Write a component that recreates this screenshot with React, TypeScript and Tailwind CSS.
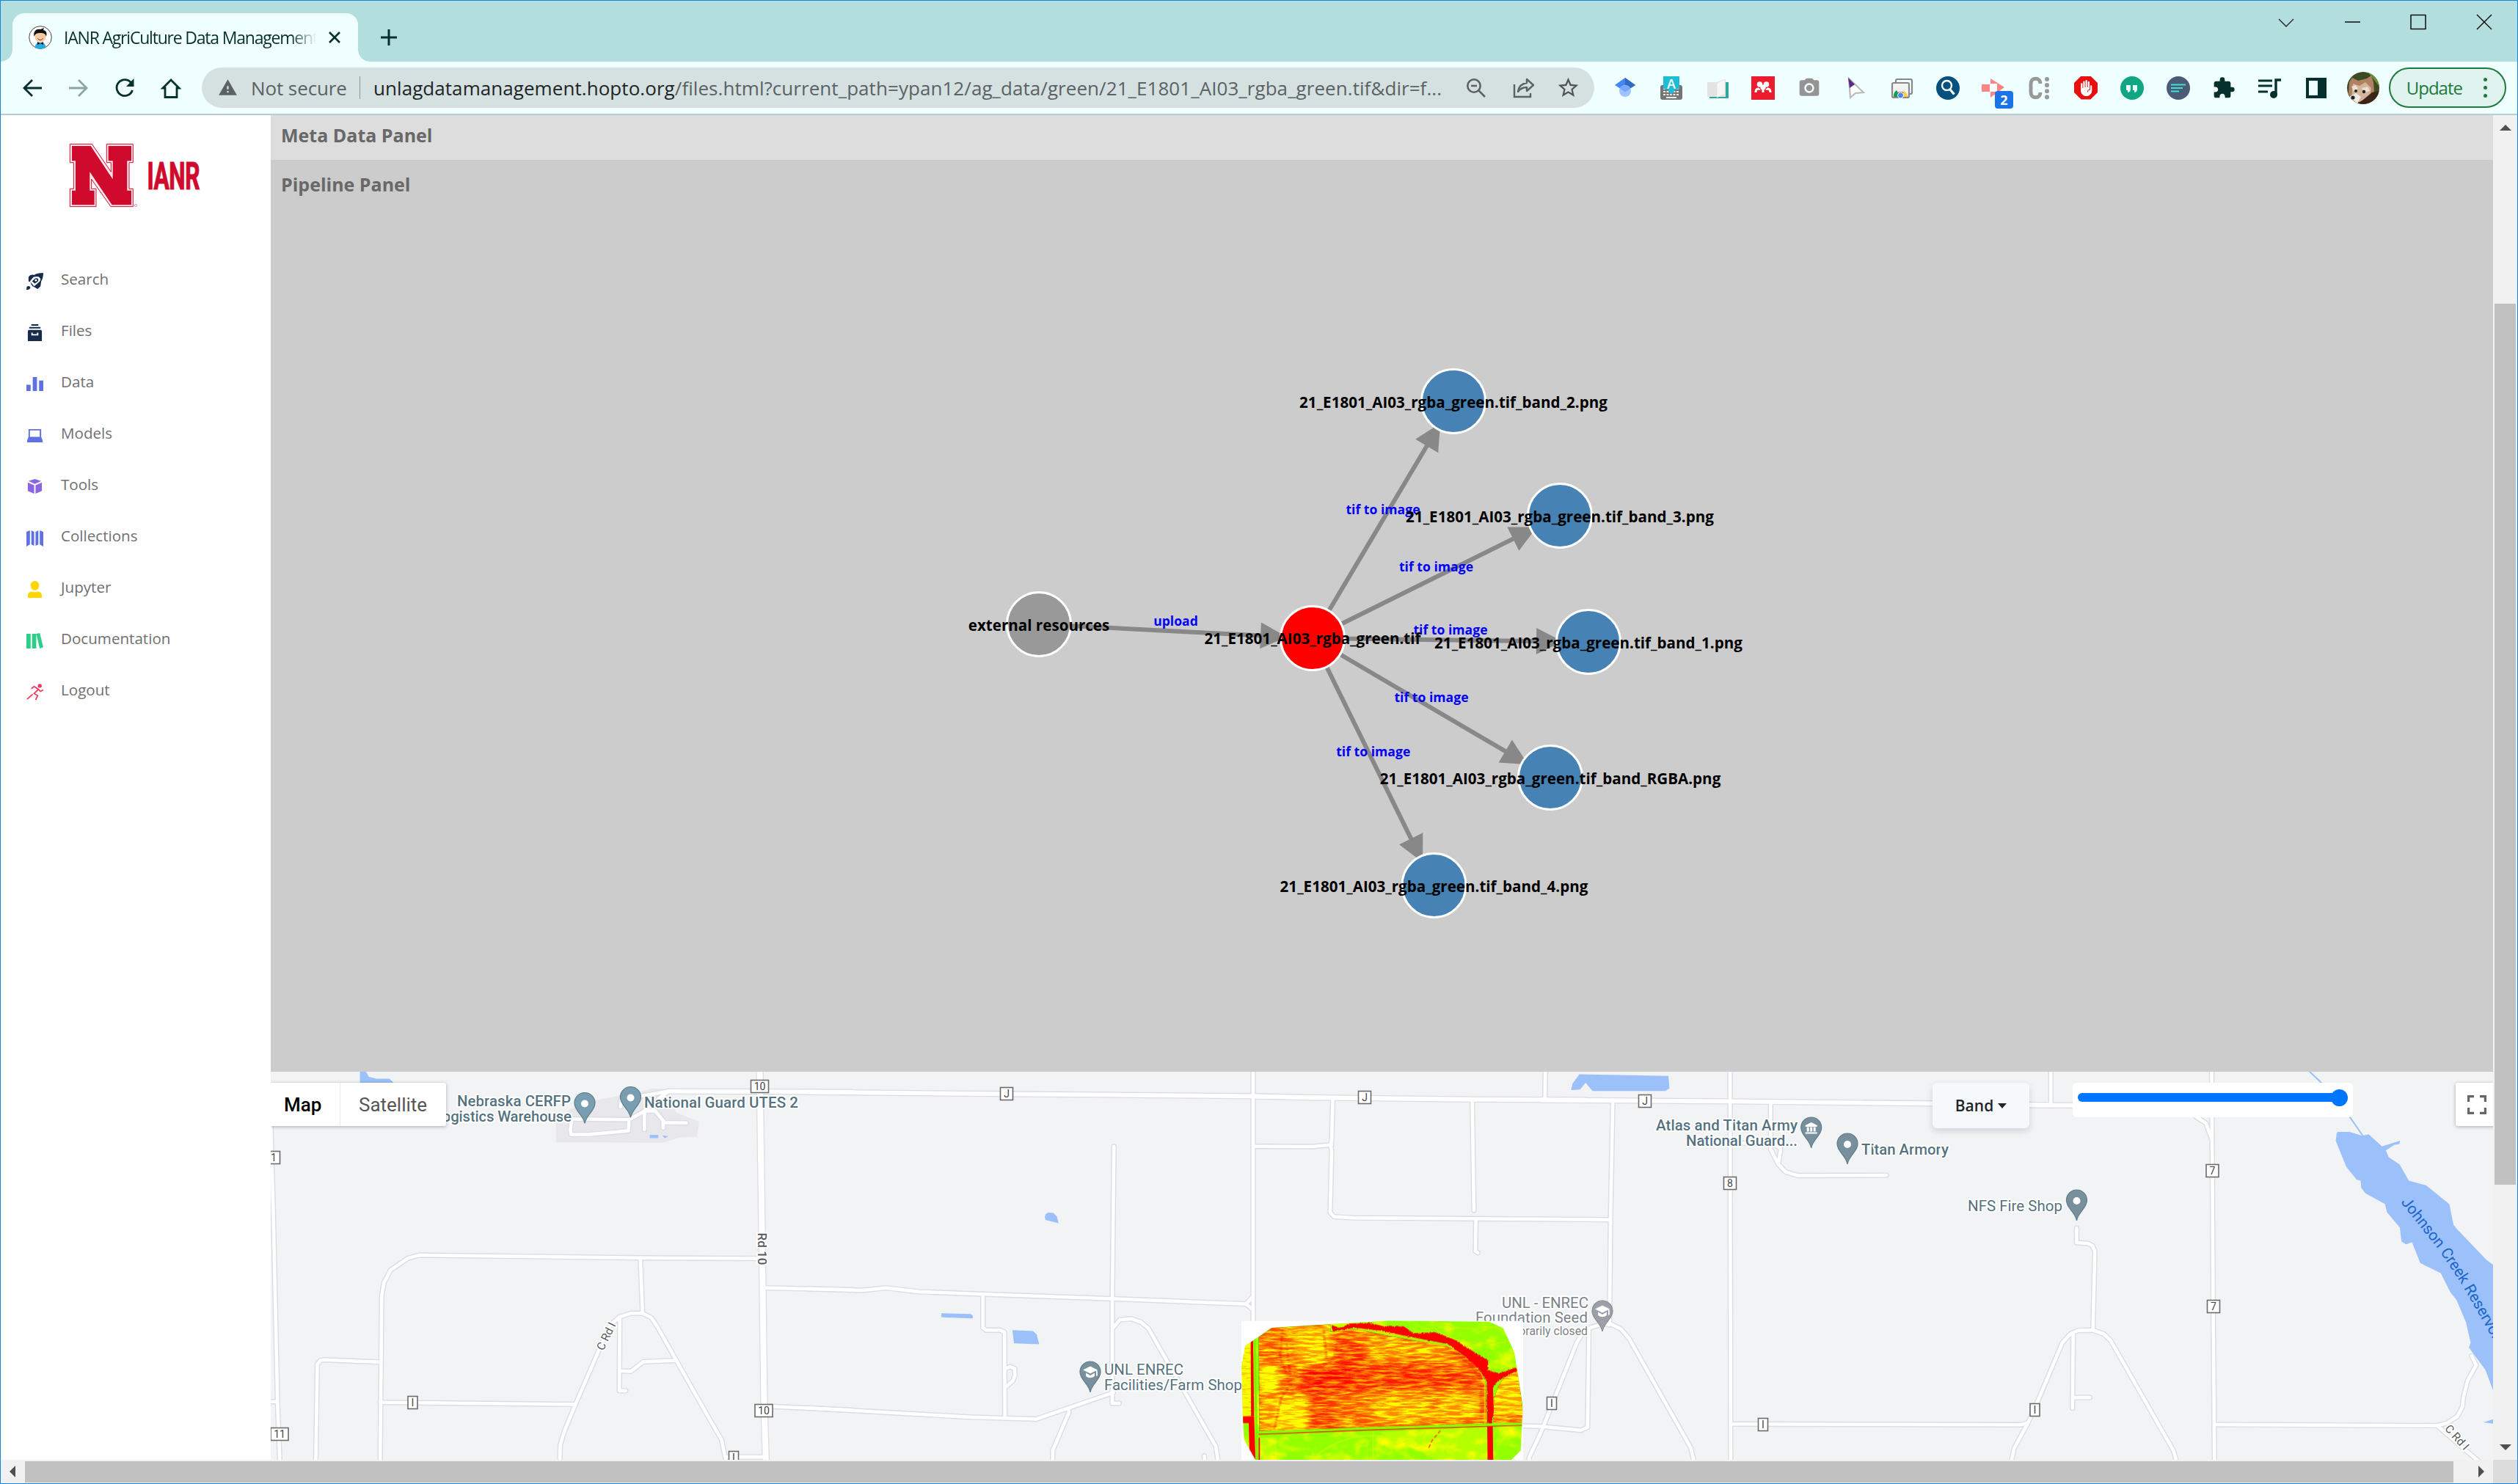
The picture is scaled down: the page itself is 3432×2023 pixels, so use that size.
import React from "react";
import { MdWarning, MdStarBorder, MdExtension, MdPhotoCamera, MdFrontHand } from "react-icons/md";

/* ---------- browser chrome ---------- */

function Avatar() {
  return (
    <svg viewBox="0 0 32 32" className="h-8 w-8 shrink-0">
      <circle cx="16" cy="16" r="15.3" fill="#fff" stroke="#444" strokeWidth="1" />
      <path d="M9 30c-.5-5 2-7 7-7s7.500 2 7 7a15 15 0 0 1-14 0z" fill="#29abe2" />
      <circle cx="16" cy="15" r="7.500" fill="#f6c9a5" />
      <path d="M7.500 15C6 7 11 4 16 5l5-2-1 3c5 1 5 5 4 9-1-4-3-5-8-5s-7 1-8.500 5z" fill="#111" />
      <path d="M12.500 17.500q3.500 4 7 0" stroke="#7a3b1d" fill="none" />
      <path d="M12 22l4 2 4-2v4l-4-2-4 2z" fill="#111" />
    </svg>
  );
}

function TitleBar() {
  return (
    <div className="flex h-[83px] w-full bg-[#b2dfdd]">
      <div className="flex w-[503px] shrink-0 items-end">
        <div className="flex h-[66px] w-full items-end">
          <div className="h-4 w-4 bg-[radial-gradient(circle_at_0_0,#b2dfdd_15.5px,#f0ffff_16px)]" />
          <div className="flex h-[66px] w-[471px] items-center rounded-t-2xl bg-[#f0ffff] pl-[22px]">
            <Avatar />
            <div className="ml-4 w-[344px] overflow-hidden whitespace-nowrap font-['Open_Sans'] text-[23px] leading-[30px] tracking-[-1.2px] text-[#06302e] [mask-image:linear-gradient(90deg,#000_90%,transparent)]">
              IANR AgriCulture Data Management
            </div>
            <svg viewBox="0 0 18 18" className="ml-4 h-[18px] w-[18px]" stroke="#06302e" strokeWidth="2.600">
              <path d="M2 2l14 14M16 2L2 16" />
            </svg>
          </div>
          <div className="h-4 w-4 bg-[radial-gradient(circle_at_100%_0,#b2dfdd_15.5px,#f0ffff_16px)]" />
        </div>
      </div>
      <svg viewBox="0 0 24 24" className="ml-[14px] mt-[38px] h-6 w-6" stroke="#06302e" strokeWidth="3">
        <path d="M12 1v22M1 12h22" />
      </svg>
      <div className="flex flex-1 justify-end gap-[66px] pr-[33px] pt-[18px]">
        <svg viewBox="0 0 24 24" className="h-6 w-6" stroke="#222" strokeWidth="1.400" fill="none">
          <path d="M2 7l10 10L22 7" />
        </svg>
        <svg viewBox="0 0 24 24" className="h-6 w-6" stroke="#000" strokeWidth="1.400">
          <path d="M2 11h21" />
        </svg>
        <svg viewBox="0 0 24 24" className="h-6 w-6" stroke="#000" strokeWidth="1.400" fill="none">
          <rect x="2" y="1.500" width="20" height="19" />
        </svg>
        <svg viewBox="0 0 24 24" className="h-6 w-6" stroke="#000" strokeWidth="1.400">
          <path d="M2 1l20 20M22 1L2 21" />
        </svg>
      </div>
    </div>
  );
}

function Nav({ children, dim }: { children: React.ReactNode; dim?: boolean }) {
  return (
    <svg
      viewBox="0 0 28 28"
      className="h-7 w-7 shrink-0"
      fill="none"
      stroke={dim ? "#8aa5a3" : "#06302e"}
      strokeWidth="2.800"
    >
      {children}
    </svg>
  );
}

function Ext({ children }: { children: React.ReactNode }) {
  return (
    <svg viewBox="0 0 32 32" className="h-8 w-8 shrink-0 overflow-visible">
      {children}
    </svg>
  );
}

function Extensions() {
  return (
    <div className="flex items-center gap-[30.800px]">
      <Ext>
        <path d="M16 2L30 12 16 21 2 12z" fill="#4285f4" />
        <path d="M16 2L30 12 16 21z" fill="#356ac3" />
        <circle cx="16" cy="20" r="8" fill="#a0c3ff" />
        <path d="M9 17a8 8 0 0 1 14 0l-7 4.500z" fill="#76a7fa" />
      </Ext>
      <Ext>
        <rect x="1" y="12" width="30" height="20" rx="3" fill="#757575" />
        <path d="M5 17h22M5 21h22M5 25h22" stroke="#e8e8e8" strokeWidth="2" strokeDasharray="3 1.500" />
        <path d="M9 29h14" stroke="#eee" strokeWidth="2" />
        <path d="M5 0h22v17l-5 1-6 7-5-7-6-1z" fill="#1fbcd6" />
        <text x="16" y="17" textAnchor="middle" fontSize="18" fontWeight="600" fill="#fff" fontFamily="Open Sans">A</text>
      </Ext>
      <Ext>
        <path d="M27 8h4v22H5v-2z" fill="#2fa69c" />
        <path d="M2 8h12l13-4v24H2z" fill="#e3e3e3" />
        <path d="M15 9l11-5v20l-11 5z" fill="#f6f6f6" stroke="#ddd" strokeWidth=".6" />
      </Ext>
      <Ext>
        <rect width="32" height="32" fill="#eb1c2d" />
        <circle cx="11.500" cy="11" r="3.800" fill="#fff" />
        <circle cx="20.500" cy="11" r="3.800" fill="#fff" />
        <circle cx="16" cy="15" r="3.600" fill="#fff" />
        <path d="M6 22c0-6 5-6 5-3M16 17v5M26 22c0-6-5-6-5-3" stroke="#fff" strokeWidth="3" fill="none" />
      </Ext>
      <MdPhotoCamera className="h-8 w-8 shrink-0" color="#949494" />
      <Ext>
        <path d="M7 3l2 26 7-6 11-1z" fill="#fff" stroke="#b9b9b9" strokeWidth="2.200" />
        <path d="M6 2l9 9-7 5z" fill="#5d2b86" />
      </Ext>
      <Ext>
        <rect x="8" y="4" width="22" height="20" rx="2" fill="none" stroke="#888" strokeWidth="2.200" />
        <rect x="3" y="9" width="23" height="20" rx="2" fill="#f3f3f3" stroke="#888" strokeWidth="2.200" />
        <path d="M5 28a10 10 0 0 1 19 0l-9-2z" fill="#db4437" />
        <path d="M5 28a10 10 0 0 1 4-9l5 9z" fill="#0f9d58" />
        <path d="M24 28a10 10 0 0 0-5-8l-3 8z" fill="#ffcd40" />
        <circle cx="14.500" cy="26" r="4" fill="#4285f4" stroke="#fff" />
      </Ext>
      <Ext>
        <circle cx="16" cy="16" r="16" fill="#05507c" />
        <circle cx="14.500" cy="12.500" r="6.500" fill="none" stroke="#fff" strokeWidth="2.400" />
        <path d="M18.500 17.500l6 7" stroke="#fff" strokeWidth="3.400" />
      </Ext>
      <Ext>
        <path d="M12 3l19 12-19 14zM0 11h11v10H0z" fill="#ff8585" />
        <rect x="12" y="10" width="9" height="11" fill="#fff" />
        <rect x="18" y="20" width="25" height="24" rx="4" fill="#1a73e8" />
        <text x="30.500" y="39" textAnchor="middle" fontSize="18" fontWeight="700" fill="#fff" fontFamily="Open Sans">2</text>
      </Ext>
      <Ext>
        <path d="M17 10c0-9-13-9-13 0v12c0 9 13 9 13 0" stroke="#999" strokeWidth="5" fill="none" />
        <path d="M26 4v26" stroke="#999" strokeWidth="6" strokeLinecap="round" strokeDasharray="0.1 8" />
      </Ext>
      <div className="flex h-8 w-8 shrink-0 items-center justify-center bg-[#e80f0f] [clip-path:polygon(30%_0,70%_0,100%_30%,100%_70%,70%_100%,30%_100%,0_70%,0_30%)]">
        <MdFrontHand className="h-[22px] w-[22px]" color="#fff" />
      </div>
      <Ext>
        <circle cx="16" cy="16" r="16" fill="#11a683" />
        <path d="M8 12h6v5q0 5-4 5v-3h-2zM17 12h6v5q0 5-4 5v-3h-2z" fill="#e3fff6" />
      </Ext>
      <Ext>
        <circle cx="16" cy="16" r="16" fill="#4a5b76" />
        <path d="M6 11.500h20M6 16h16M6 20.500h11" stroke="#3fe0d6" strokeWidth="2" />
      </Ext>
      <MdExtension className="h-8 w-8 shrink-0" color="#06302e" />
      <Ext>
        <path d="M0 6h19M0 13h19M0 21h13" stroke="#06302e" strokeWidth="3" />
        <path d="M24 25V5h7" stroke="#06302e" strokeWidth="3.400" fill="none" />
        <circle cx="21" cy="25" r="5" fill="#06302e" />
      </Ext>
      <Ext>
        <path d="M2 2h28v28H2zM6 6v20h12V6z" fill="#06302e" fillRule="evenodd" />
      </Ext>
      <svg viewBox="0 0 44 44" className="-ml-[5px] h-11 w-11 shrink-0">
        <defs>
          <clipPath id="profile"><circle cx="22" cy="22" r="22" /></clipPath>
        </defs>
        <g clipPath="url(#profile)">
          <rect width="44" height="44" fill="#3b4a22" />
          <path d="M28 0h16v20z" fill="#6d8a35" />
          <path d="M3 14l4-6 8 4 12-3 6-4 3 9 1 12-4 16H10L2 30z" fill="#b08062" />
          <path d="M8 16l9 3 8-5 8 8-2 12-12 8L6 34z" fill="#d3b59c" />
          <path d="M6 20l6-2 3 5-6 3zM20 22l8-2 3 6-7 2z" fill="#eadfd4" />
          <path d="M3 34l9-5 7 5-5 9z" fill="#f0ebe6" />
          <circle cx="12" cy="26" r="2" fill="#222" />
          <circle cx="23" cy="27" r="2.200" fill="#222" />
          <circle cx="8" cy="35" r="2.600" fill="#2b211d" />
          <path d="M12 44l10-6 12-10 10-2v18z" fill="#3d2416" />
        </g>
      </svg>
    </div>
  );
}

function Toolbar() {
  return (
    <div className="flex h-[73px] w-full items-center border-b-2 border-[#b5cfcd] bg-[#f0ffff] pl-[29px]">
      <div className="flex items-center gap-[35px]">
        <Nav><path d="M27 14H4M14 3L3 14l11 11" /></Nav>
        <Nav dim><path d="M1 14h23M14 3l11 11-11 11" /></Nav>
        <Nav>
          <path d="M24.500 17a11 11 0 1 1-2-10.500" />
          <path d="M26.500 1v11H16z" fill="#06302e" stroke="none" />
        </Nav>
        <Nav><path d="M6 26.500V14H3L14 3l11 11h-3v12.500z" /></Nav>
      </div>
      <div className="ml-[28px] flex h-[55px] w-[1898px] shrink-0 items-center rounded-full bg-[#d5e1e1] font-['Open_Sans'] text-[26px] leading-none text-[#5b6264]">
        <MdWarning className="ml-[22px] h-[27px] w-[27px]" color="#5b6264" />
        <span className="ml-[18px] w-[131px] whitespace-nowrap tracking-[-0.1px]">Not secure</span>
        <span className="ml-[17px] h-[31px] w-px bg-[#8b9797]" />
        <span className="ml-[18px] w-[1461px] whitespace-nowrap tracking-[0.060px]">
          <span className="text-[#1f2426]">unlagdatamanagement.hopto.org</span>
          /files.html?current_path=ypan12/ag_data/green/21_E1801_AI03_rgba_green.tif&amp;dir=f...
        </span>
        <span className="ml-[28px] flex items-center gap-[36px]">
          <svg viewBox="0 0 28 28" className="h-7 w-7" fill="none" stroke="#5b6264" strokeWidth="2.600">
            <circle cx="11" cy="11" r="8.700" />
            <path d="M7 11h8M17.500 17.500L26 26" />
          </svg>
          <svg viewBox="0 0 30 28" className="h-7 w-[30px]" fill="none" stroke="#5b6264" strokeWidth="2.400">
            <path d="M2 9v17h22v-5" />
            <path d="M19 2l9 8-9 8v-5c-6 0-9 2-12 6 1-7 5-11 12-12z" strokeLinejoin="round" />
          </svg>
          <MdStarBorder className="-ml-[7px] h-[33px] w-[33px]" color="#4f5557" />
        </span>
      </div>
      <div className="ml-[26px]">
        <Extensions />
      </div>
      <div className="ml-[13px] flex h-[55px] w-[160px] shrink-0 items-center rounded-full border-2 border-[#1c7a3e] bg-[#e0f3ee] pl-[22px]">
        <span className="w-[78px] whitespace-nowrap font-['Open_Sans'] text-[24px] leading-none tracking-[-1px] text-[#1c7a3e]">Update</span>
        <span className="ml-[27px] flex flex-col gap-[6px]">
          <i className="h-[5px] w-[5px] rounded-full bg-[#1c7a3e]" />
          <i className="h-[5px] w-[5px] rounded-full bg-[#1c7a3e]" />
          <i className="h-[5px] w-[5px] rounded-full bg-[#1c7a3e]" />
        </span>
      </div>
    </div>
  );
}

/* ---------- sidebar ---------- */

const menu: { label: string; icon: React.ReactNode }[] = [
  {
    label: "Search",
    icon: (
      <g fill="#172b4d">
        <path d="M24 0c-6 0-10 1-13 3-4-1-6 0-8 3l0 6 3 1c0 3 2 6 5 7l5 3 4-4 1-7c2-3 3-7 3-12z" />
        <path d="M0 24c0-4 1-6 4-5s2 5-4 5z" />
        <path d="M5 12l5-6c4-1 7-1 9 1 2 2 1 4-1 6l-7 6z" fill="#fff" />
        <path d="M8 12l4-4c3-1 5 0 5 2s-1 3-5 5z" />
        <circle cx="13.500" cy="10.500" r="1.600" fill="#fff" />
      </g>
    ),
  },
  {
    label: "Files",
    icon: (
      <g fill="#172b4d">
        <path d="M7 0h10v2H7zM4 4h16v2H4zM3 8h18l1 2v14H2V10z" />
        <path d="M7 12h2v2h6v-2h2v4H7z" fill="#fff" />
      </g>
    ),
  },
  {
    label: "Data",
    icon: <path d="M0 13h6v9H0zM9 2h6v20H9zM18 7h6v15h-6z" fill="#5e72e4" />,
  },
  {
    label: "Models",
    icon: <path d="M3 3h18v11l2 5v3H1v-3l2-5zm2 2v9h14V5z" fill="#5e72e4" fillRule="evenodd" />,
  },
  {
    label: "Tools",
    icon: <path d="M12 1l9 3-9 4-9-4zM2 6l9 4v12l-9-4zM22 6l-9 4v12l9-4z" fill="#8965e0" />,
  },
  {
    label: "Collections",
    icon: <path d="M0 3l5-2v20l-5 3zM7 1l4 2v20l-4-2zM13 3l4-2v20l-4 2zM19 1l5 2v21l-5-3z" fill="#5e72e4" />,
  },
  {
    label: "Jupyter",
    icon: <path d="M12 0a6 6 0 0 1 6 7c0 4-3 6-6 6s-6-2-6-6a6 6 0 0 1 6-7zM2 24v-4c1-4 3-5 6-5l4 1 4-1c3 0 5 1 6 5v4z" fill="#ffd600" />,
  },
  {
    label: "Documentation",
    icon: <path d="M0 2h6v21H0zM8 2h6v21H8zM14 2l5-1 5 20-5 2z" fill="#2dce89" />,
  },
  {
    label: "Logout",
    icon: (
      <g stroke="#f5365c" strokeWidth="1.800" fill="none">
        <circle cx="19" cy="3" r="2.800" fill="#f5365c" stroke="none" />
        <path d="M7 7l4-3 6 4-6 6 5 3-3 6M1 22l8-7M17 8l3 3 4-2" />
      </g>
    ),
  },
];

function Logo() {
  return (
    <svg viewBox="0 0 220 120" className="ml-[79px] mt-[23px] h-[120px] w-[220px] shrink-0">
      <g transform="scale(0.3333)">
        <path
          d="M46 49H136L214 163V125H196V49H304V125H288V232H304V305H213L134 193V232H153V305H46V232H61V125H46Z"
          fill="#fbe9ec"
          stroke="#cf0a2c"
          strokeWidth="3"
        />
        <path
          d="M54 57H131L221 193V118H203V57H297V118H280V239H297V298H218L127 163V239H146V298H54V239H69V118H54Z"
          fill="#cf0a2c"
        />
        <circle cx="315" cy="300" r="5" fill="none" stroke="#d8808f" strokeWidth="2.500" />
      </g>
      <text
        transform="translate(120.500 78) scale(0.62 1)"
        fontFamily="Roboto"
        fontWeight="700"
        fontSize="51"
        textLength="116"
        fill="#cf0a2c"
        stroke="#cf0a2c"
        strokeWidth="1.200"
      >
        IANR
      </text>
    </svg>
  );
}

function Sidebar() {
  return (
    <aside className="flex h-full w-[368px] shrink-0 flex-col bg-white">
      <Logo />
      <nav className="mt-[46px] flex flex-col">
        {menu.map((m) => (
          <div key={m.label} className="flex h-[70px] items-center pl-[35px]">
            <svg viewBox="0 0 24 24" className="mt-1 h-[23px] w-[23px] shrink-0">
              {m.icon}
            </svg>
            <span className="mb-px ml-[24px] whitespace-nowrap font-['Open_Sans'] text-[20.600px] leading-none text-[#707070]">{m.label}</span>
          </div>
        ))}
      </nav>
    </aside>
  );
}

/* ---------- pipeline graph ---------- */

const root = { x: 1789, y: 870 };
const external = { x: 1416, y: 851 };
const bands = [
  { x: 1981, y: 547, label: "21_E1801_AI03_rgba_green.tif_band_2.png" },
  { x: 2126, y: 703, label: "21_E1801_AI03_rgba_green.tif_band_3.png" },
  { x: 2165, y: 875, label: "21_E1801_AI03_rgba_green.tif_band_1.png" },
  { x: 2113, y: 1060, label: "21_E1801_AI03_rgba_green.tif_band_RGBA.png" },
  { x: 1954.5, y: 1207, label: "21_E1801_AI03_rgba_green.tif_band_4.png" },
];

type Pt = { x: number; y: number };

function Link({ a, b, label }: { a: Pt; b: Pt; label: string }) {
  const len = Math.hypot(b.x - a.x, b.y - a.y);
  const deg = (Math.atan2(b.y - a.y, b.x - a.x) * 180) / Math.PI;
  return (
    <>
      <g transform={`translate(${a.x} ${a.y}) rotate(${deg})`}>
        <path d={`M0 0H${len - 60}`} stroke="#888" strokeWidth="6" />
        <path d={`M${len - 71} -18V18L${len - 35} 0z`} fill="#888" />
      </g>
      <text x={(a.x + b.x) / 2} y={(a.y + b.y) / 2 - 8} textAnchor="middle" fontSize="17.600" fill="#00f">
        {label}
      </text>
    </>
  );
}

function Node({ x, y, color }: { x: number; y: number; color: string }) {
  return <circle cx={x} cy={y} r="43.500" fill={color} stroke="#fff" strokeWidth="3" />;
}

function Graph() {
  return (
    <svg viewBox="369 278 3029 1183" className="h-[1183px] w-full" fontFamily="Open Sans" fontWeight="700">
      <Link a={external} b={root} label="upload" />
      {bands.map((b) => (
        <Link key={b.label} a={root} b={b} label="tif to image" />
      ))}
      <Node {...external} color="#999" />
      <Node {...root} color="#f00" />
      {bands.map((b) => (
        <Node key={b.label} x={b.x} y={b.y} color="#4682b4" />
      ))}
      <g textAnchor="middle" fontSize="20.600" fill="#000">
        <text x={external.x} y={external.y + 8.5}>external resources</text>
        <text x={root.x} y={root.y + 8}>21_E1801_AI03_rgba_green.tif</text>
        {bands.map((b) => (
          <text key={b.label} x={b.x} y={b.y + 8.5}>{b.label}</text>
        ))}
      </g>
    </svg>
  );
}

/* ---------- map ---------- */

/* Map geometry is stored per tile, each with its own origin and scale. */
const tiles = [
  {
    t: "translate(360 1440) scale(0.5102 0.3718)",
    main: ["1080,128 1568,131"],
    minor: [
      "18,256 25,600 36,1280 42,1485",
      "10,1266 36,1266",
      "310,1485 314,880 320,830 338,783 385,740 415,729 1005,739 1320,741",
      "1005,739 1011,942",
      "790,1485 791,1425 802,1375 832,1275 895,1075 925,985 950,955 980,942 1011,942 1034,958 1050,990 1100,1112 1190,1330 1222,1405 1234,1485",
      "950,960 949,1226 966,1226",
      "949,1153 980,1155 1013,1120 1100,1115",
      "138,1485 142,1130 150,1115 160,1113 310,1121",
      "310,1269 830,1276",
      "1338,849 1568,856",
      "1345,1283 1568,1297",
      "1234,1469 1340,1469",
      "820,230 975,232 1018,200 1050,160 1080,128",
      "975,232 973,273 870,286 820,287 818,270 822,230",
      "1016,200 1016,268",
      "1016,200 1045,200 1070,243 1128,244",
      "1066,240 1066,262",
      "952,185 955,150 1010,145 1080,128",
    ],
    water: ["256,50 272,56 280,75 300,82 335,82 346,97 256,97", "1030,288 1053,288 1053,300 1030,300", "1064,290 1080,293 1070,300"],
  },
  {
    t: "translate(1100 1440) scale(0.4464 0.3718)",
    main: ["0,131 610,138 1363,146 1568,152"],
    minor: [
      "1362,50 1362,980",
      "937,330 932,889 932,1272 953,1272",
      "935,995 955,966 990,962 1020,975 1042,997 1248,1430 1255,1485",
      "537,872 537,995 547,1004 590,1004 603,1012 604,1323",
      "606,1145 620,1138 634,1145 635,1170 628,1190 606,1213",
      "797,1290 800,1305 750,1445 750,1485",
      "0,852 170,858 240,849 340,863 540,872 935,889 1340,908 1362,880",
      "1340,908 1362,930",
      "0,1289 500,1323 700,1330 935,1233",
      "1213,1465 1214,1485",
    ],
    water: ["728,580 735,573 752,574 763,588 768,612 728,600 726,590", "410,942 500,945 506,951 506,961 410,957", "627,1004 690,1007 701,1020 709,1056 632,1052"],
  },
  {
    t: "translate(1680 1440) scale(0.3333 0.3718)",
    main: ["80,147 410,152 980,158 1440,160"],
    minor: [
      "410,155 405,310 400,325 405,345 399,572 415,588 490,592 1440,598 1545,599",
      "85,330 325,331 405,324",
      "980,160 987,565",
      "995,600 993,715 1003,720",
    ],
    water: [],
  },
  {
    t: "translate(2100 1440) scale(0.4464 0.3718)",
    main: ["0,160 578,165 1196,173 1568,179"],
    minor: [
      "14,50 13,155",
      "220,165 213,600 210,985",
      "578,50 580,1485",
      "702,170 702,340 725,395 748,424 785,437 1055,436",
      "725,395 733,340 718,325 620,318",
      "-35,1485 -35,1470 0,1380 110,1050 128,1015 155,993 190,982 215,982 245,1000 270,1035 458,1435 468,1485",
      "147,1000 143,1360 122,1371 0,1357 -60,1355",
      "580,1348 1465,1351 1485,1345",
    ],
    water: ["118,66 390,72 393,118 380,127 158,127 137,97 120,122 93,124 97,100"],
  },
  {
    t: "translate(2750 1440) scale(0.4349 0.3718)",
    main: ["0,178 172,180 608,182"],
    minor: [
      "608,50 610,400 613,940 617,1485",
      "530,182 560,222 590,245 607,300",
      "104,50 104,175",
      "185,630 185,683 220,686 235,695 242,715 236,1003",
      "-20,1485 -10,1435 32,1345 70,1245 140,1050 165,1018 190,1005 236,1004 270,1018 292,1043 488,1445 498,1485",
      "174,1018 172,1290",
      "172,1251 226,1251",
      "617,1350 1315,1354 1345,1345 1378,1320 1394,1285 1397,1250 1410,1190 1437,1132 1423,1098",
      "1315,1354 1445,1485",
    ],
    water: [
      "1003,277 1040,277 1080,291 1100,286 1142,330 1199,309 1196,322 1181,324 1154,345 1163,370 1197,396 1226,456 1280,473 1353,542 1366,617 1378,635 1470,747 1495,768 1495,1240 1466,1150 1414,1067 1420,1050 1405,975 1375,892 1357,867 1326,795 1262,758 1236,682 1217,689 1203,679 1198,628 1158,572 1151,541 1090,502 1077,482 1075,456 1062,452 1030,405 997,310 1000,282",
      "1460,1342 1495,1329 1495,1348",
    ],
  },
];

function Roads({ casing }: { casing?: boolean }) {
  return (
    <g fill="none" stroke={casing ? "#dadde2" : "#fff"} strokeLinejoin="round" strokeLinecap="round">
      {tiles.map((tile) => (
        <g key={tile.t} transform={tile.t}>
          {tile.minor.map((p) => (
            <polyline key={p} points={p} strokeWidth={casing ? 7.4 : 4.6} vectorEffect="non-scaling-stroke" />
          ))}
          {tile.main.map((p) => (
            <polyline key={p} points={p} strokeWidth={casing ? 8.4 : 5.8} vectorEffect="non-scaling-stroke" />
          ))}
        </g>
      ))}
      <polyline points="1035.500,1458 1038.500,1678 1041.500,1916 1044,1994" strokeWidth={casing ? 10.5 : 8} />
    </g>
  );
}

function Badge({ x, y, children }: { x: number; y: number; children: string }) {
  const w = children.length > 1 ? 24 : children === "I" ? 13 : 17;
  return (
    <g>
      <rect x={x - w / 2} y={y - 8.5} width={w} height="17" fill="#fff" stroke="#6b6b6b" strokeWidth="1.600" />
      <text x={x} y={y + 5} textAnchor="middle" fontSize="14" fill="#444">{children}</text>
    </g>
  );
}

function Pin({ x, y, color = "#78909c", edge = "#5f7c8a", kind }: { x: number; y: number; color?: string; edge?: string; kind?: "cap" | "museum" }) {
  return (
    <g transform={`translate(${x} ${y})`}>
      <path d="M0 42.500C-2 30-14 26-14 14.500a14 14 0 0 1 28 0C14 26 2 30 0 42.500z" fill={color} stroke={edge} strokeWidth="1.200" />
      {kind === "cap" && (
        <g fill="#fff">
          <path d="M0 7l10 5-10 5-10-5zM8 13h1.800v7H8z" />
          <path d="M-6 16l6 3.500L6 16v4c-2 3.500-10 3.500-12 0z" />
        </g>
      )}
      {kind === "museum" && (
        <g fill="#fff">
          <path d="M0 7.500l8 4v2H-8v-2zM-6 14h3v6h-3zM-1.500 14h3v6h-3zM3 14h3v6H3zM-8 21H8v2H-8z" />
        </g>
      )}
      {!kind && <circle cy="15.500" r="5" fill="#fff" />}
    </g>
  );
}

function Field() {
  return (
    <g transform="translate(1680 1440) scale(0.3333 0.3718)">
      <defs>
        <clipPath id="field">
          <path d="M160 995L400 982 640 969 1050 973 1107 997 1152 1085 1187 1283 1178 1445 1140 1480H94L47 1405 42 1320 37 1140 52 1062z" />
        </clipPath>
        <clipPath id="crop">
          <path d="M106 1030L160 995 400 982 400 1010 500 1000Q720 1040 870 1060 Q1000 1110 1035 1190L1040 1350 110 1375z" />
        </clipPath>
        <filter id="grain" x="0" y="0" width="1" height="1" colorInterpolationFilters="sRGB">
          <feTurbulence type="fractalNoise" baseFrequency="0.016 0.12" numOctaves="5" seed="7" result="n" />
          <feColorMatrix in="n" values="0 0 0 0 0  1.600 0 0 0 -0.600  0 0 0 0 0  0 0 0 0 1" result="g" />
          <feComposite in="SourceGraphic" in2="g" operator="arithmetic" k2="1" k3="1" result="m" />
          <feComposite in="m" in2="SourceAlpha" operator="in" />
        </filter>
        <filter id="meadow" x="0" y="0" width="1" height="1" colorInterpolationFilters="sRGB">
          <feTurbulence type="fractalNoise" baseFrequency="0.012 0.02" numOctaves="4" seed="3" result="n" />
          <feColorMatrix in="n" values="1.100 0 0 0 -0.520  0 0 0 0 0  0 0 0 0 0  0 0 0 0 1" result="g" />
          <feComposite in="SourceGraphic" in2="g" operator="arithmetic" k2="1" k3="1" result="m" />
          <feComposite in="m" in2="SourceAlpha" operator="in" />
        </filter>
        <filter id="soft"><feGaussianBlur stdDeviation="14" /></filter>
        <filter id="rough" x="-0.1" y="-0.1" width="1.200" height="1.200">
          <feTurbulence type="fractalNoise" baseFrequency="0.15" numOctaves="2" />
          <feDisplacementMap in="SourceGraphic" scale="9" xChannelSelector="R" yChannelSelector="G" />
        </filter>
      </defs>
      <rect x="36" y="970" width="1152" height="520" fill="#fff" />
      <g clipPath="url(#field)">
        <g filter="url(#meadow)">
          <rect x="36" y="960" width="1152" height="530" fill="#94ff00" />
          <path d="M600 1378L1040 1358V1490H860L700 1420z" fill="#b4ff00" />
          <path d="M110 1398H180V1490H110z" fill="#b4ff00" />
        </g>
        <g filter="url(#grain)">
          <rect x="36" y="1040" width="40" height="290" fill="#f8d000" />
          <g clipPath="url(#crop)">
            <rect x="90" y="960" width="980" height="430" fill="#ff5000" />
            <g filter="url(#soft)">
              <path d="M240 990H400V1130H270z" fill="#ff9c00" />
              <ellipse cx="145" cy="1185" rx="45" ry="50" fill="#fad800" />
              <path d="M110 1260H160V1375H110z" fill="#ff8800" />
              <path d="M170 1250H300V1375H170z" fill="#ffb800" />
              <path d="M540 1040H860L880 1110H560z" fill="#ff8000" />
              <path d="M420 1040H520L560 1120 900 1140 1010 1170V1215L560 1230 290 1250 270 1130 420 1120z" fill="#ff1c00" />
              <path d="M280 1130H480V1220H280z" fill="#ff0000" />
              <path d="M310 1250H410L430 1375H300z" fill="#ff2c00" />
              <path d="M560 1245L1010 1235V1325L600 1345z" fill="#ff8c00" />
              <circle cx="820" cy="1275" r="20" fill="#ff1800" />
              <circle cx="735" cy="1105" r="20" fill="#ff2000" />
            </g>
            <path d="M205 1000L195 1100 250 1240M220 1050L240 1200 200 1250 170 1370M372 1000L385 1110M432 1030L415 1110 370 1132" stroke="#f01000" strokeWidth="11" fill="none" strokeDasharray="18 5 30 4" opacity=".45" />
            <path d="M870 1066Q990 1120 1018 1195V1345" stroke="#f01800" strokeWidth="14" fill="none" opacity=".45" />
          </g>
          <path d="M1068 1350Q1050 1190 1164 1140L1187 1300V1345z" fill="#ff9800" />
          <path d="M1070 1315H1187V1347H1068z" fill="#ff3000" opacity=".6" />
        </g>
        <path d="M405 1018L450 1005Q560 997 700 1028T880 1062Q1010 1110 1032 1200V1345" stroke="#f2d000" strokeWidth="5" fill="none" opacity=".8" />
        <g filter="url(#rough)">
          <path d="M404 985L440 996 480 980 560 978 620 990 700 990 740 1015 830 1012 900 1035 990 1085 1045 1115V1150L1090 1162 1164 1140V1152L1085 1190 1065 1215 1068 1300 1060 1350 1042 1345 1040 1260 1040 1190 1010 1150 950 1100 880 1055 740 1031 600 1005 500 995 410 1008z" fill="#f00" />
        </g>
        <path d="M1041 1345H1064L1066 1490H1043z" fill="#f00" />
        <path d="M74 1040H84L88 1320H76z" fill="#f00" />
        <path d="M42 1320H88L94 1490H70L66 1345H42z" fill="#f00" />
        <path d="M90 1030L100 1490" stroke="#84ee00" strokeWidth="9" />
        <path d="M106 1385L560 1370 1187 1352" stroke="#f00" strokeWidth="4" fill="none" />
        <path d="M100 1380L560 1364 1187 1347" stroke="#84ff00" strokeWidth="9" fill="none" />
        <path d="M109 1398V1490" stroke="#f00" strokeWidth="5" />
        <path d="M850 1372L815 1410 800 1440" stroke="#ff6000" strokeWidth="5" strokeDasharray="14 8" fill="none" />
        <path d="M575 1375V1490M320 1480Q500 1340 720 1420" stroke="#c8ff00" strokeWidth="4" fill="none" />
        <path d="M820 970Q960 1020 1107 985M830 1000Q920 1070 1150 1045" stroke="#c8f000" strokeWidth="4" fill="none" />
      </g>
    </g>
  );
}

function MapView() {
  return (
    <svg viewBox="369 1461 3029 529" className="absolute inset-0 h-[529px] w-[3029px]" fontFamily="Roboto">
      <rect x="369" y="1461" width="3029" height="529" fill="#f1f3f4" />
      <polygon
        transform={tiles[0].t}
        points="780,315 780,225 850,170 960,142 1040,118 1075,120 1085,150 1100,205 1162,240 1157,295 1110,297 1065,317"
        fill="#e8e8ec"
      />
      <g fill="#9cc0f9">
        {tiles.map((tile) => (
          <g key={tile.t} transform={tile.t}>
            {tile.water.map((p) => (
              <polygon key={p} points={p} />
            ))}
          </g>
        ))}
      </g>
      <path d="M3145 1458L3185 1496 3203 1523 3221 1549" stroke="#9cc0f9" strokeWidth="2" fill="none" />
      <Roads casing />
      <Roads />
      <Badge x={1035.5} y={1481}>10</Badge>
      <Badge x={1041} y={1923}>10</Badge>
      <Badge x={373} y={1578}>1</Badge>
      <Badge x={381} y={1955}>11</Badge>
      <Badge x={562.5} y={1912}>I</Badge>
      <Badge x={1000} y={1987}>I</Badge>
      <Badge x={1372} y={1491}>J</Badge>
      <Badge x={1860} y={1496}>J</Badge>
      <Badge x={2242} y={1501}>J</Badge>
      <Badge x={2358} y={1613}>8</Badge>
      <Badge x={2115} y={1913}>I</Badge>
      <Badge x={2403} y={1942}>I</Badge>
      <Badge x={2773.5} y={1922}>I</Badge>
      <Badge x={3015.5} y={1596}>7</Badge>
      <Badge x={3017} y={1781}>7</Badge>
      <g fontSize="20.500" fontWeight="500" fill="#557280" stroke="#fff" strokeWidth="4" strokeLinejoin="round" paintOrder="stroke">
        <text x="623" y="1508" textLength="155">Nebraska CERFP</text>
        <text x="592" y="1528.500" textLength="187">Logistics Warehouse</text>
        <text x="878" y="1510" textLength="210">National Guard UTES 2</text>
        <text x="1505" y="1874" textLength="108" fontWeight="400">UNL ENREC</text>
        <text x="1505" y="1894.500" textLength="188" fontWeight="400">Facilities/Farm Shop</text>
        <text x="2257" y="1541" textLength="193">Atlas and Titan Army</text>
        <text x="2298" y="1561.500" textLength="152">National Guard...</text>
        <text x="2537" y="1574" textLength="119">Titan Armory</text>
        <text x="2682" y="1650.500" textLength="129" fontWeight="400">NFS Fire Shop</text>
        <g fill="#7b8287" fontWeight="400">
          <text x="2047" y="1782.500" textLength="118">UNL - ENREC</text>
          <text x="2011" y="1803" textLength="153">Foundation Seed</text>
          <text x="2164" y="1820" textAnchor="end" fontSize="15.800">Temporarily closed</text>
        </g>
        <g fill="#555b60" textAnchor="middle" fontSize="17">
          <text transform="translate(1033 1702.500) rotate(90)">Rd 10</text>
          <text transform="translate(831 1824) rotate(-64)" fontSize="15.500" fontWeight="400">C Rd I</text>
          <text transform="translate(3345 1963) rotate(48)" fontSize="15.500" fontWeight="400">C Rd I</text>
        </g>
      </g>
      <path id="reservoir" d="M3272 1639L3324 1704 3356 1752 3389 1810 3427 1880" fill="none" />
      <text fontSize="21" fill="#1a66cc">
        <textPath href="#reservoir">Johnson Creek Reservoir</textPath>
      </text>
      <Pin x={797} y={1489} color="#7a9eb1" />
      <Pin x={859.5} y={1481} color="#7a9eb1" />
      <Pin x={1486} y={1855.5} kind="cap" />
      <Pin x={2184} y={1772.5} color="#9aa0a6" edge="#868c92" kind="cap" />
      <Pin x={2468.7} y={1522.5} kind="museum" />
      <Pin x={2518} y={1544.5} />
      <Pin x={2830.5} y={1621.5} />
      <Field />
    </svg>
  );
}

function MapPanel() {
  return (
    <div className="relative h-[529px] w-full overflow-hidden">
      <MapView />
      <div className="absolute inset-x-0 top-[15px] flex items-start">
        <div className="flex h-[59px] w-[239px] shrink-0 items-center rounded-r-[3px] bg-white font-['Roboto'] text-[26px] leading-none shadow-[0_1px_5px_rgba(0,0,0,0.3)]">
          <span className="w-[94px] shrink-0 pl-[18px] font-medium text-black">Map</span>
          <span className="flex h-full flex-1 items-center border-l border-[#e8e8e8] pl-[25px] text-[#565656]">Satellite</span>
        </div>
        <button className="ml-[2026px] flex h-[62px] w-[132px] shrink-0 items-center justify-center gap-[6px] rounded-md bg-[#f6f9fc] font-['Open_Sans'] text-[21px] font-semibold leading-none text-[#212529] shadow-[0_4px_10px_rgba(50,50,93,0.16)]">
          Band
          <i className="border-x-[6px] border-t-[7px] border-x-transparent border-t-[#212529]" />
        </button>
        <div className="ml-[59px] flex h-[47px] w-[382px] shrink-0 rounded-md bg-white pl-[7px] pt-[8px]">
          <div className="flex h-[24px] w-[368px] items-center">
            <div className="h-3 flex-1 rounded-full bg-[#0075ff]" />
            <div className="-ml-[22px] h-[23px] w-[23px] rounded-full bg-[#0075ff]" />
          </div>
        </div>
        <div className="ml-[140px] flex h-[59px] w-[58px] shrink-0 items-center justify-center rounded-[3px] bg-white shadow-[0_1px_5px_rgba(0,0,0,0.3)]">
          <svg viewBox="0 0 26 26" className="h-[26px] w-[26px]" fill="none" stroke="#666" strokeWidth="3.200">
            <path d="M1.600 9V1.600H9M17 1.600h7.400V9M24.400 17v7.400H17M9 24.400H1.600V17" />
          </svg>
        </div>
      </div>
    </div>
  );
}

/* ---------- page ---------- */

export default function App() {
  return (
    <div className="flex h-[2023px] w-[3432px] flex-col overflow-hidden border border-[#1883d7] bg-white">
      <TitleBar />
      <Toolbar />
      <div className="flex h-[1833px] w-full">
        <Sidebar />
        <main className="flex w-[3029px] shrink-0 flex-col bg-[#ccc] font-['Open_Sans']">
          <h2 className="flex h-[61px] items-center bg-[#ddd] pb-[6px] pl-[14px] text-[25px] font-bold leading-none text-[#686868]">
            Meta Data Panel
          </h2>
          <h2 className="flex h-[60px] items-center pl-[14px] pt-[7px] text-[25px] font-bold leading-none text-[#686868]">
            Pipeline Panel
          </h2>
          <Graph />
          <MapPanel />
        </main>
        <div className="flex w-[33px] flex-col items-center bg-[#f1f1f1]">
          <i className="mt-[13px] border-x-[8px] border-b-[8px] border-x-transparent border-b-[#505050]" />
          <div className="mt-[236px] h-[1201px] w-[29px] bg-[#c1c1c1]" />
          <i className="mt-[354px] border-x-[8px] border-t-[8px] border-x-transparent border-t-[#505050]" />
        </div>
      </div>
      <div className="flex h-[32px] w-full items-center bg-[#f1f1f1]">
        <i className="ml-[12px] border-y-[8px] border-r-[8px] border-y-transparent border-r-[#505050]" />
        <div className="ml-[13px] h-[29px] w-[3310px] bg-[#c1c1c1]" />
        <i className="ml-[34px] border-y-[8px] border-l-[8px] border-y-transparent border-l-[#505050]" />
        <div className="ml-auto h-full w-[33px] bg-[#dcdcdc]" />
      </div>
    </div>
  );
}
